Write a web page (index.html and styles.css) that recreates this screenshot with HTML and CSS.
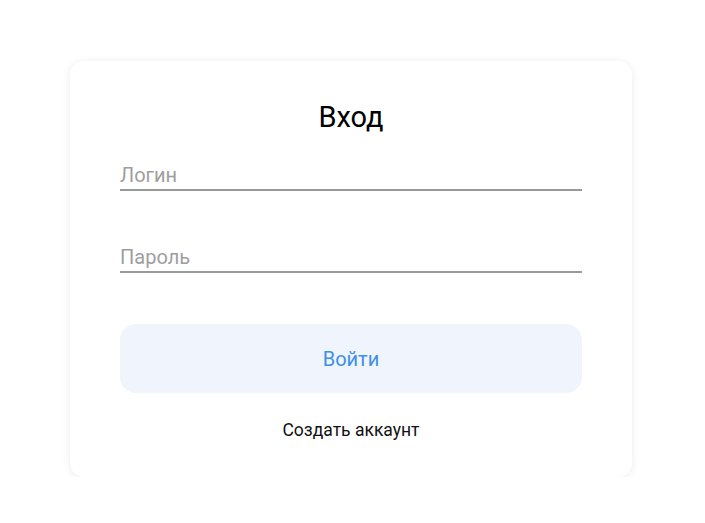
FILE: index.html
```html
<!DOCTYPE html>
<html lang="ru">
<head>
<meta charset="utf-8">
<title>Вход</title>
<link rel="stylesheet" href="styles.css">
</head>
<body>
<div class="card">
  <h1 class="title">Вход</h1>
  <input class="field field-first" type="text" placeholder="Логин">
  <input class="field field-second" type="password" placeholder="Пароль">
  <button class="btn" type="button">Войти</button>
  <a class="link" href="#">Создать аккаунт</a>
</div>
</body>
</html>
```
FILE: styles.css
```css
html, body {
  margin: 0;
  padding: 0;
  background: #ffffff;
  font-family: Roboto, "Noto Sans", sans-serif;
}
.card {
  box-sizing: border-box;
  width: 562px;
  margin: 61px 0 0 70px;
  padding: 40px 50px 37px;
  background: #fff;
  border-radius: 14px;
  box-shadow: 0 1px 8px rgba(0, 0, 0, 0.08);
  display: flex;
  flex-direction: column;
  align-items: stretch;
}
.title {
  margin: 0;
  font-size: 29px;
  line-height: 33px;
  font-weight: 400;
  text-align: center;
  color: #000;
}
.field {
  box-sizing: content-box;
  height: 28px;
  padding: 0;
  margin: 0;
  border: none;
  border-bottom: 2px solid #999;
  outline: none;
  font-family: inherit;
  font-size: 20px;
  color: #000;
  background: transparent;
}
.field::placeholder {
  color: #9e9e9e;
  opacity: 1;
}
.field-first { margin-top: 27px; }
.field-second { margin-top: 52px; }
.btn {
  margin-top: 51px;
  height: 69px;
  border: none;
  border-radius: 16px;
  background: #f0f5fd;
  color: #3d8fe9;
  font-family: inherit;
  font-size: 20px;
  cursor: pointer;
}
.link {
  margin-top: 27px;
  align-self: center;
  font-size: 17.5px;
  line-height: 20px;
  color: #111;
  text-decoration: none;
}
```
